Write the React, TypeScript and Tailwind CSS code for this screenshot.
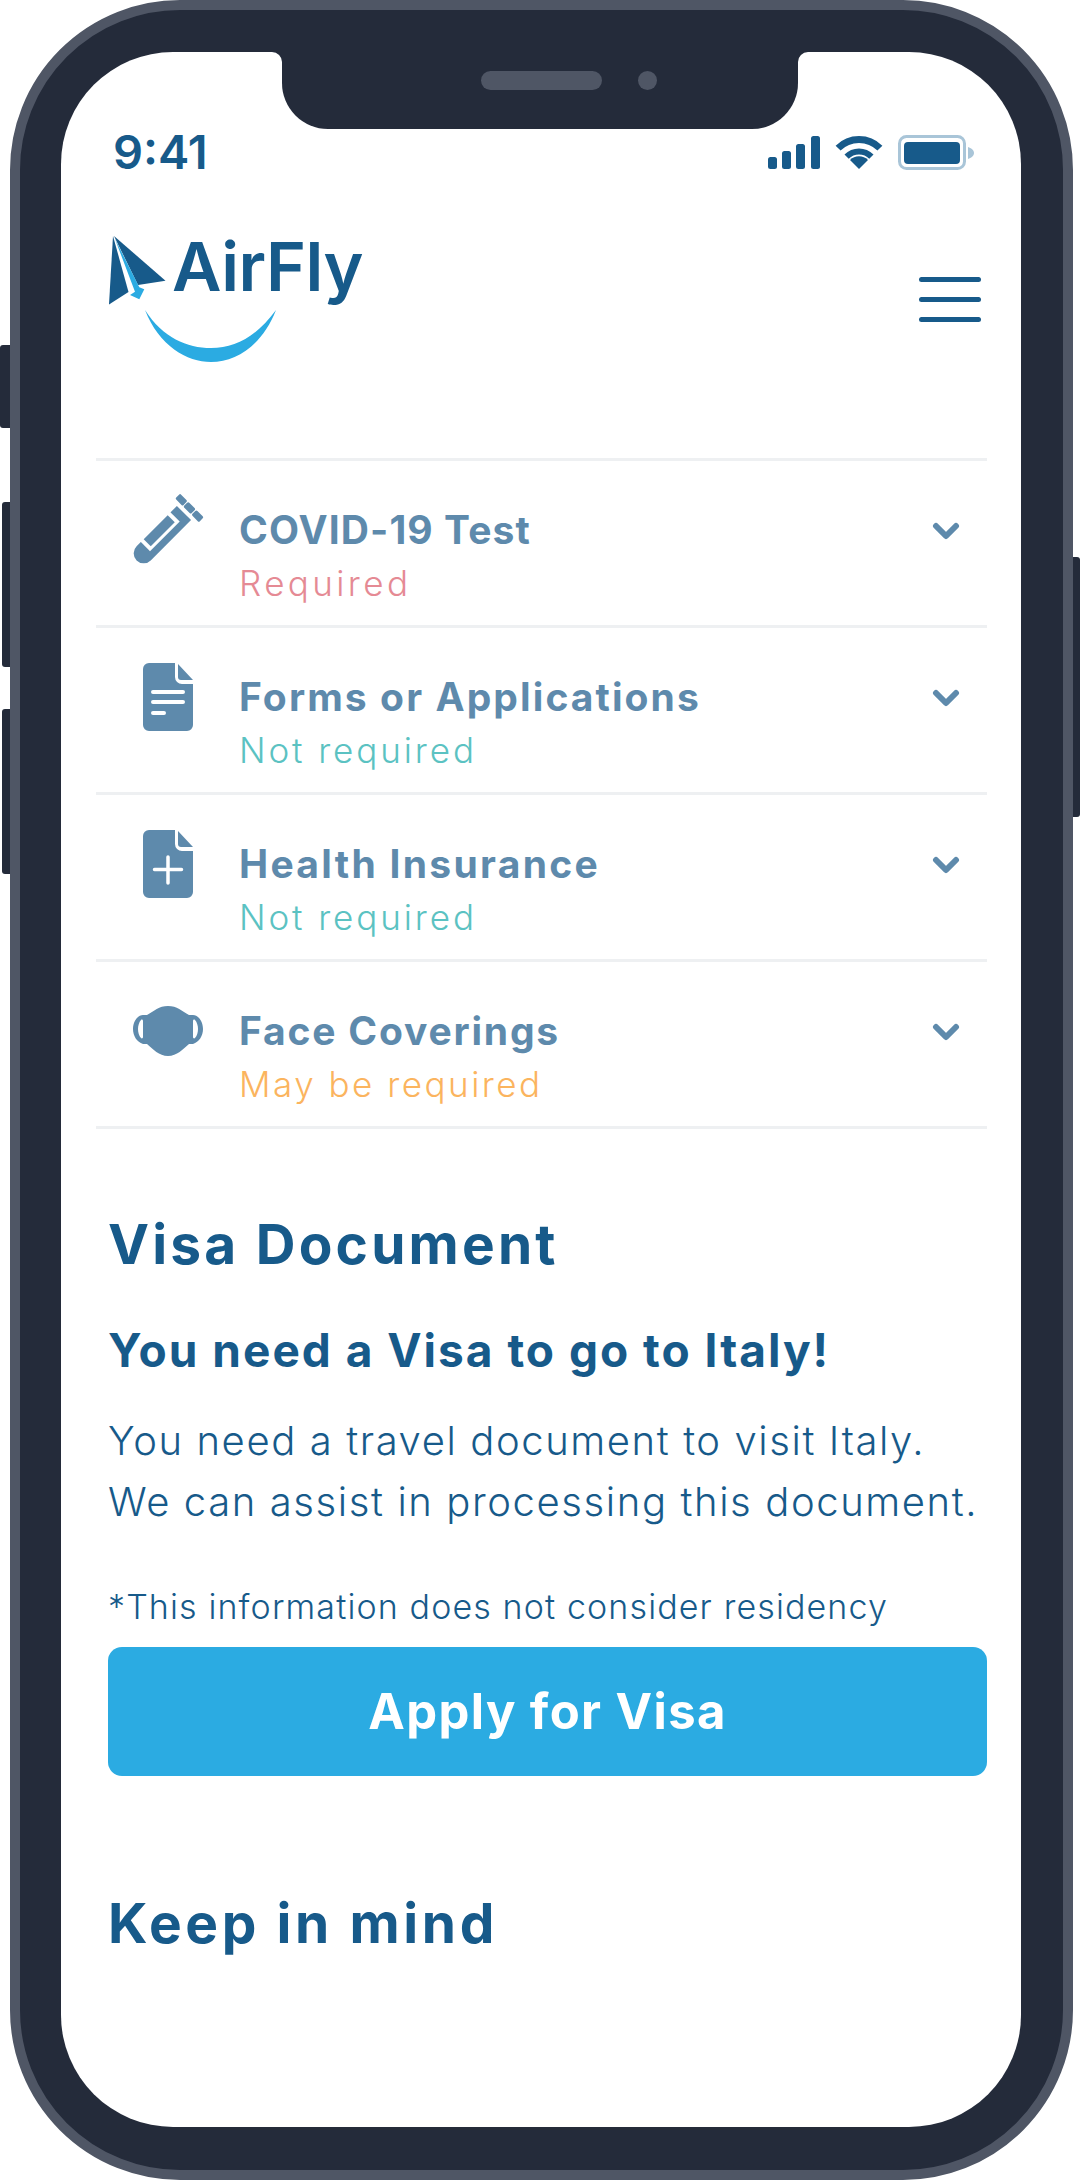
import React from "react";

const Row = ({ icon, title, sub, color, track, subTrack }: { icon: React.ReactNode; title: string; sub: string; color: string; track: string; subTrack: string }) => (
  <div className="flex h-[167px] border-b-[3px] border-[#eef0f2] pl-[37px] pr-[26px] pt-[34px]">
    <div className="flex h-[70px] w-[70px] shrink-0 items-center justify-center">{icon}</div>
    <div className="flex-1 pl-[36px] pt-[13px]">
      <div className={`text-[39px] leading-[44px] font-bold text-[#5e8aac] ${track}`}>{title}</div>
      <div className={`text-[35px] leading-[44px] mt-[9px] font-light ${subTrack} ${color}`}>{sub}</div>
    </div>
    <svg width="30" height="24" viewBox="0 0 30 24" className="mt-[27px]" fill="none" stroke="#5e8aac" strokeWidth="6" strokeLinecap="round" strokeLinejoin="round">
      <path d="M5 4l10 10 10-10" />
    </svg>
  </div>
);

const Tube = () => (
  <svg width="70" height="70" viewBox="0 0 70 70" className="overflow-visible -translate-x-[1px]">
    <g transform="rotate(45 35 35)">
      <path d="M25 11h20v57a10 10 0 0 1-20 0z" fill="#5e8aac" />
      <rect x="23" y="20" width="15" height="42" fill="#fff" />
      <rect x="25" y="24" width="10" height="34" fill="#5e8aac" />
      <rect x="18.500" y="0" width="10.500" height="7" rx="1.500" fill="#5e8aac" />
      <rect x="30" y="0" width="10.500" height="7" rx="1.500" fill="#5e8aac" />
      <rect x="41.500" y="0" width="10.500" height="7" rx="1.500" fill="#5e8aac" />
    </g>
  </svg>
);

const Doc = ({ plus }: { plus?: boolean }) => (
  <svg width="50" height="68" viewBox="0 0 50 68">
    <path d="M6 0h26v14a7 7 0 0 0 7 7h11v41a6 6 0 0 1-6 6H6a6 6 0 0 1-6-6V6a6 6 0 0 1 6-6z" fill="#5e8aac" />
    <path d="M35 1v13a3 3 0 0 0 3 3h12z" fill="#5e8aac" />
    {plus ? (
      <path d="M25 27v26M11.500 39.500h27" stroke="#fff" strokeWidth="3.500" strokeLinecap="round" />
    ) : (
      <path d="M10 29h30M10 39h30M10 50h11" stroke="#fff" strokeWidth="4" strokeLinecap="round" />
    )}
  </svg>
);

const Mask = () => (
  <svg width="70" height="50" viewBox="0 0 70 50">
    <path d="M35 0c9 0 14 5 21 9h4c5 0 10 6 10 14 0 7-4 13-10 15h-4c-6 5-12 12-21 12s-15-7-21-12h-4C4 36 0 30 0 23 0 15 5 9 10 9h4c7-4 12-9 21-9z" fill="#5e8aac" />
    <path d="M8 14c-2 2-3 6-3 9s1 7 3 9c1 1 2 0 2-1V15c0-1-1-2-2-1zM62 14c2 2 3 6 3 9s-1 7-3 9c-1 1-2 0-2-1V15c0-1 1-2 2-1z" fill="#fff" />
  </svg>
);

const Status = () => (
  <div className="flex items-center">
    <svg width="52" height="33" viewBox="0 0 52 33" fill="#175a8a">
      <rect x="0" y="21" width="9" height="12" rx="2.500" />
      <rect x="14" y="15" width="9" height="18" rx="2.500" />
      <rect x="28" y="8" width="9" height="25" rx="2.500" />
      <rect x="43" y="0" width="9" height="33" rx="2.500" />
    </svg>
    <svg width="48" height="34" viewBox="0 0 48 34" className="ml-[15px]" fill="none" stroke="#175a8a">
      <path d="M3.100 13.100a29.500 29.500 0 0 1 41.800 0" strokeWidth="7" />
      <path d="M11.600 21.600a17.500 17.500 0 0 1 24.800 0" strokeWidth="6" />
      <path d="M24 34l-9-9a12.700 12.700 0 0 1 18 0z" fill="#175a8a" stroke="none" />
    </svg>
    <svg width="76" height="35" viewBox="0 0 76 35" className="ml-[15px]">
      <rect x="1.500" y="1.500" width="65" height="32" rx="7" fill="none" stroke="#a9c5d8" strokeWidth="3" />
      <rect x="6" y="7" width="56" height="22" rx="4" fill="#175a8a" />
      <path d="M70 12c3 1 6 3 6 6s-3 5-6 6z" fill="#a9c5d8" />
    </svg>
  </div>
);

const Logo = () => (
  <div className="flex flex-col">
    <div className="flex h-[69px] items-start">
      <svg width="57" height="69" viewBox="0 0 57 69">
        <path d="M4 0L0 68.500L19.500 56z" fill="#175a8a" />
        <path d="M5 0L56.500 44.700L29 49z" fill="#175a8a" />
        <path d="M6 3L30.300 51.300L35.300 53.300L30.300 63.300L21 59L26 55.700z" fill="#2babe2" />
      </svg>
      <span className="ml-[6px] text-[68px] leading-[60px] font-semibold tracking-[-0.5px] text-[#175a8a]">AirFly</span>
    </div>
    <svg width="131" height="52" viewBox="0 0 131 52" className="ml-[36px] mt-[5px]">
      <path d="M0 0C14 36 42 52 66 52C92 52 118 34 131 0C110 28 90 38 66 38C42 38 18 28 0 0Z" fill="#2babe2" />
    </svg>
  </div>
);

const rows = [
  { icon: <Tube />, title: "COVID-19 Test", sub: "Required", color: "text-[#e58a94]", track: "tracking-[1.100px]", subTrack: "tracking-[3.400px]" },
  { icon: <Doc />, title: "Forms or Applications", sub: "Not required", color: "text-[#5bc2c2]", track: "tracking-[2.100px]", subTrack: "tracking-[2.900px]" },
  { icon: <Doc plus />, title: "Health Insurance", sub: "Not required", color: "text-[#5bc2c2]", track: "tracking-[2.300px]", subTrack: "tracking-[2.900px]" },
  { icon: <Mask />, title: "Face Coverings", sub: "May be required", color: "text-[#fbb45e]", track: "tracking-[1.800px]", subTrack: "tracking-[2.500px]" },
];

export default function App() {
  return (
    <div className="relative h-[2180px] w-[1080px] bg-white overflow-hidden font-['Inter',sans-serif] text-[#175a8a]">
      <div className="absolute left-0 top-[345px] h-[83px] w-[12px] rounded-l-[3px] bg-[#242b3a]" />
      <div className="absolute left-[2px] top-[502px] h-[165px] w-[10px] rounded-l-[3px] bg-[#242b3a]" />
      <div className="absolute left-[2px] top-[709px] h-[165px] w-[10px] rounded-l-[3px] bg-[#242b3a]" />
      <div className="absolute right-0 top-[557px] h-[260px] w-[12px] rounded-r-[3px] bg-[#242b3a]" />
      <div className="absolute left-[10px] top-0 h-[2180px] w-[1063px] rounded-[170px] border-[10px] border-[#4f5665] bg-[#242b3a] p-[42px_42px_43px_41px]">
        <div className="relative flex h-[2075px] w-[960px] flex-col rounded-[112px] bg-white overflow-hidden">
          <div className="absolute left-[221px] top-0 flex h-[77px] w-[516px] items-start rounded-b-[46px] bg-[#242b3a] pl-[199px] pt-[19px]">
            <div className="h-[19px] w-[121px] rounded-full bg-[#4f5665]" />
            <div className="ml-[36px] h-[19px] w-[19px] rounded-full bg-[#4f5665]" />
            <svg width="10" height="10" viewBox="0 0 10 10" className="absolute left-[-10px] top-0"><path d="M0 0h10v10a10 10 0 0 0-10-10z" fill="#242b3a" /></svg>
            <svg width="10" height="10" viewBox="0 0 10 10" className="absolute right-[-10px] top-0"><path d="M10 0H0v10A10 10 0 0 1 10 0z" fill="#242b3a" /></svg>
          </div>
          <div className="mt-[80px] flex h-[40px] items-center justify-between pl-[52px] pr-[47px]">
            <span className="text-[47px] font-semibold leading-[40px]">9:41</span>
            <Status />
          </div>
          <div className="mt-[64px] flex items-center justify-between pl-[48px] pr-[40px]">
            <Logo />
            <div className="flex w-[62px] flex-col gap-[15px]">
              <div className="h-[5px] rounded-full bg-[#175a8a]" />
              <div className="h-[5px] rounded-full bg-[#175a8a]" />
              <div className="h-[5px] rounded-full bg-[#175a8a]" />
            </div>
          </div>
          <div className="ml-[35px] mr-[34px] mt-[96px] border-t-[3px] border-[#eef0f2]">
            {rows.map((r) => (
              <Row key={r.title} {...r} />
            ))}
          </div>
          <div className="flex flex-col pl-[47px] pr-[34px]">
            <h2 className="mt-[85px] text-[55px] leading-[60px] font-bold tracking-[3.200px]">Visa Document</h2>
            <h3 className="mt-[51px] text-[46px] leading-[50px] font-bold tracking-[2px]">You need a Visa to go to Italy!</h3>
            <p className="mt-[35px] text-[40px] leading-[61px] font-light tracking-[1.600px] whitespace-nowrap">You need a travel document to visit Italy.<br />We can assist in processing this document.</p>
            <p className="mt-[55px] text-[34px] leading-[40px] font-light tracking-[1.120px] whitespace-nowrap">*This information does not consider residency</p>
            <button className="mt-[20px] flex h-[129px] items-center justify-center rounded-[14px] bg-[#2babe2] text-[49px] font-bold tracking-[1.400px] text-white">Apply for Visa</button>
            <h2 className="mt-[117px] text-[55px] leading-[60px] font-bold tracking-[3.600px]">Keep in mind</h2>
          </div>
        </div>
      </div>
    </div>
  );
}
